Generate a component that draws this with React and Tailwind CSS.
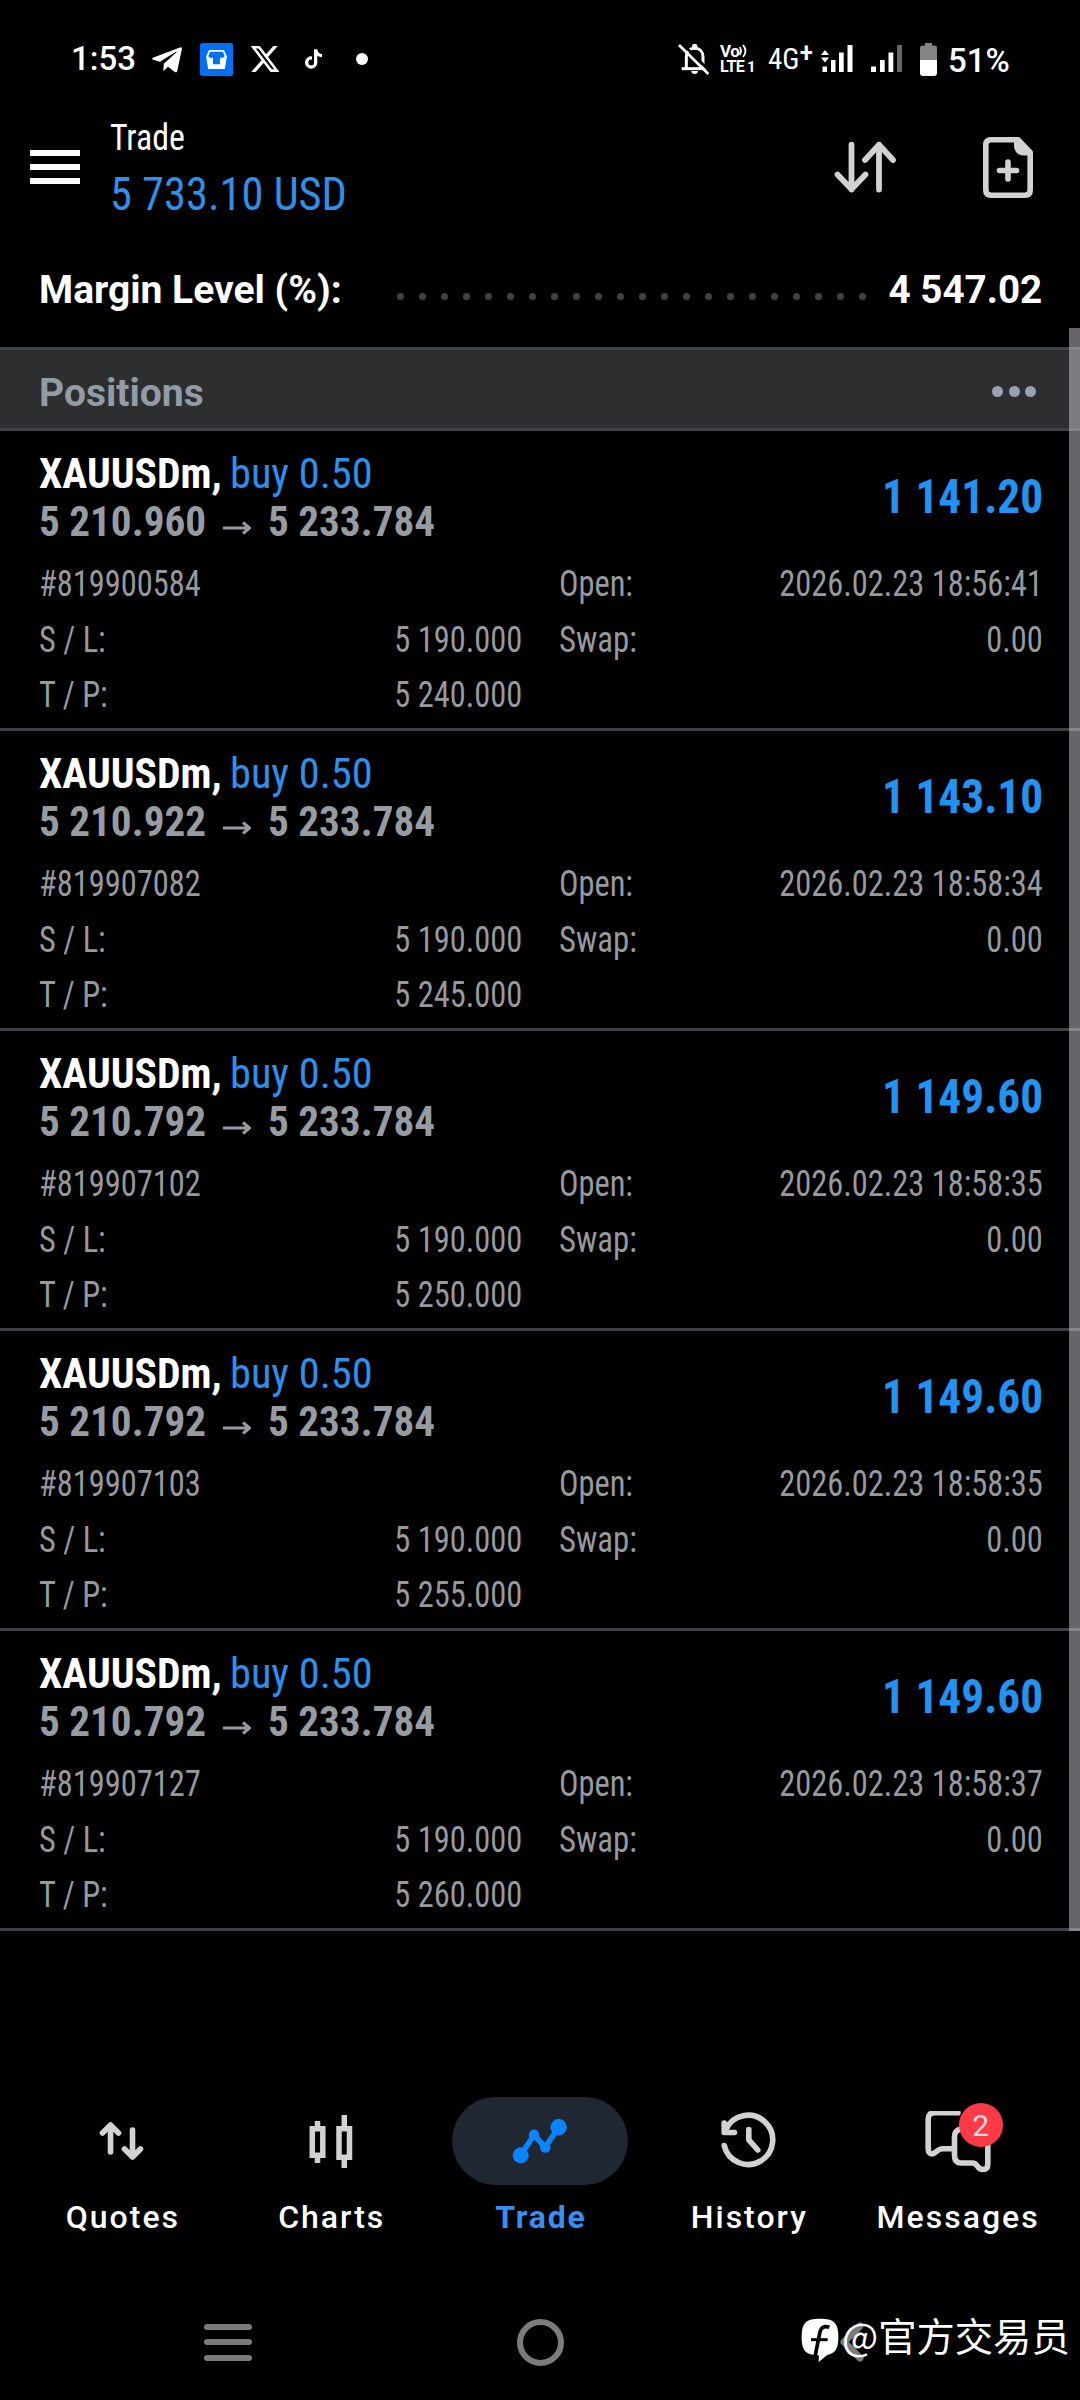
import { FaTelegramPlane } from "react-icons/fa";
import { FaTiktok, FaXTwitter } from "react-icons/fa6";

const positions = [
  { id: "#819900584", open: "5 210.960", profit: "1 141.20", time: "2026.02.23 18:56:41", tp: "5 240.000" },
  { id: "#819907082", open: "5 210.922", profit: "1 143.10", time: "2026.02.23 18:58:34", tp: "5 245.000" },
  { id: "#819907102", open: "5 210.792", profit: "1 149.60", time: "2026.02.23 18:58:35", tp: "5 250.000" },
  { id: "#819907103", open: "5 210.792", profit: "1 149.60", time: "2026.02.23 18:58:35", tp: "5 255.000" },
  { id: "#819907127", open: "5 210.792", profit: "1 149.60", time: "2026.02.23 18:58:37", tp: "5 260.000" },
];

function BellOff() {
  return (
    <svg viewBox="25 20 96 96" className="h-8 w-8" fill="none" stroke="white" strokeWidth="9">
      <path d="M50 96V62c0-15 9-26 25-26s25 11 25 26v34" />
      <path d="M36 97h74" />
      <circle cx="75" cy="30" r="8" fill="white" stroke="none" />
      <path d="M65 104h20c0 6-4 9-10 9s-10-3-10-9z" fill="white" stroke="none" />
      <path d="M36 20l84 84" stroke="black" strokeWidth="8" />
      <path d="M28 26l88 87" strokeWidth="8" />
    </svg>
  );
}

function ShopBadge() {
  return (
    <svg viewBox="0 0 33 33" className="h-[33px] w-[33px]">
      <rect width="33" height="33" rx="2.5" fill="#0070f5" />
      <path d="M9.500 7.500h14l2.800 6-2 12h-15.600l-2-12z" fill="white" stroke="white" strokeWidth="1.200" strokeLinejoin="round" />
      <path d="M10.200 8.800h12.600l2 4.500-2 1.500h-2.800v6.500h-7v-6.500h-2.800l-2-1.500z" fill="#0070f5" />
      <path d="M15 14.500h3v6h-3z" fill="#0070f5" />
    </svg>
  );
}

function Volte() {
  return (
    <div className="relative h-[30px] w-9 font-bold text-white">
      <span className="absolute left-0 top-0 text-[17px] leading-[14px] tracking-[-0.5px]">Vo</span>
      <svg viewBox="0 0 10 14" className="absolute left-[19px] top-0 h-[14px] w-2.5" fill="none" stroke="white" strokeWidth="1.8">
        <path d="M0.500 3q3 4 0 8M4 1q5 6 0 12" />
      </svg>
      <span className="absolute left-0 top-4 text-[16px] leading-[14px] tracking-[-0.5px]">LTE</span>
      <span className="absolute left-[27px] top-4 text-[15px] leading-[14px]">1</span>
    </div>
  );
}

function SignalData() {
  return (
    <svg viewBox="0 0 32 28" className="h-7 w-8" fill="white">
      <path d="M0 10l4-5 4 5zM0 12.500h8l-4 5z" />
      <path d="M1.500 21.500h4.500v5.500H1.500zM10 15h4.500v12H10zM18 7.500h4.700v19.500H18zM26.500 0h5v27h-5z" />
    </svg>
  );
}

function Signal() {
  return (
    <svg viewBox="0 0 32 28" className="h-7 w-8" fill="white">
      <path d="M1 21.500h5v5.500H1zM10 15h4.700v12H10zM18.500 7.500h4.800v19.500h-4.800z" />
      <path d="M27 0h5v27h-5z" fill="#666" />
    </svg>
  );
}

function Battery() {
  return (
    <svg viewBox="0 0 17 33" className="h-[33px] w-[17px]">
      <path d="M5 0h7v2.500h2.500q2.500 0 2.500 2.500v12H0V5q0-2.500 2.500-2.500H5z" fill="#858585" />
      <path d="M0 17h17v13q0 3-3 3H3q-3 0-3-3z" fill="white" />
    </svg>
  );
}

function StatusBar() {
  return (
    <div className="flex h-[118px] items-center justify-between pl-[71px] pr-[69px] text-white">
      <div className="flex items-center">
        <span className="w-[80px] text-[33px] font-medium leading-10">1:53</span>
        <FaTelegramPlane className="mt-0.5 h-[34px] w-[32px]" />
        <span className="ml-[17px]"><ShopBadge /></span>
        <FaXTwitter className="ml-[16px] h-8 w-8" />
        <FaTiktok className="ml-[24px] h-5 w-[17px]" />
        <span className="ml-[34px] h-3 w-3 rounded-full bg-white" />
      </div>
      <div className="flex items-center">
        <BellOff />
        <span className="ml-2.5"><Volte /></span>
        <span className="ml-3 flex h-10 w-[53px] text-[29px] leading-10 [font-stretch:75%]">
          4G<span className="-mt-1 text-[28px] font-medium leading-9">+</span>
        </span>
        <SignalData />
        <span className="ml-[17px]"><Signal /></span>
        <span className="ml-[18px]"><Battery /></span>
        <span className="ml-[11px] mt-1 w-[63px] text-[33px] font-medium leading-10">51%</span>
      </div>
    </div>
  );
}

function Header() {
  return (
    <header className="flex h-[98px] items-center pl-[30px] pr-[47px]">
      <div className="flex w-[50px] flex-col gap-2">
        <span className="h-1.5 bg-white" />
        <span className="h-1.5 bg-white" />
        <span className="h-1.5 bg-white" />
      </div>
      <div className="ml-[30px] flex-1 pt-0.5 [font-stretch:75%]">
        <div className="origin-left scale-x-[0.94] text-[36px] leading-[50px] text-white">Trade</div>
        <div className="origin-left scale-x-[0.945] text-[47px] leading-[61px] text-[#2f90e8]">5 733.10 USD</div>
      </div>
      <svg viewBox="0 0 62 52" className="h-[52px] w-[62px]" fill="none" stroke="#d2d2d2" strokeWidth="5.800" strokeLinecap="round" strokeLinejoin="round">
        <path d="M17.500 3.700V48.500M3.500 33.500l14 14.800 14-14.800M45 48.500V3.700M31 19l14-15.300L59 19" />
      </svg>
      <svg viewBox="0 0 50 61" className="ml-[87px] h-[61px] w-[50px]" fill="none" stroke="#d2d2d2" strokeWidth="5.600" strokeLinecap="round">
        <path d="M35 2.800H8q-5.200 0-5.200 5.200v45q0 5.200 5.200 5.200h34q5.200 0 5.200-5.200V15.500z" strokeLinejoin="round" />
        <path d="M31 4v4q0 10 10 10.500h6V14L36 3z" fill="#d2d2d2" stroke="none" />
        <path d="M16.500 33.500h17M25 25v17" />
      </svg>
    </header>
  );
}

function MarginRow() {
  return (
    <div className="flex h-[131px] items-center justify-between pl-[39px] pr-[38px] pt-[17px] text-[39px] font-bold leading-[50px] text-white">
      <span className="w-[358px]">Margin Level (%):</span>
      <div className="mt-3 flex flex-1 gap-[15px]">
        {Array.from({ length: 22 }, (_, i) => (
          <span key={i} className="h-[7px] w-[7px] shrink-0 rounded-full bg-[#434145]" />
        ))}
      </div>
      <span className="origin-right scale-x-[0.99]">4 547.02</span>
    </div>
  );
}

function Position({ item }) {
  return (
    <article className="h-[300px] border-b-3 border-[#434047] pl-[39px] pr-[38px] pt-[18px] [font-stretch:75%]">
      <div className="flex items-center justify-between leading-[48px]">
        <div>
          <div className="flex text-[43px]">
            <span className="w-[191px] origin-left scale-x-[0.97] whitespace-nowrap font-bold text-white">XAUUSDm,</span>
            <span className="origin-left scale-x-[0.985] text-[#2d90ee]">buy 0.50</span>
          </div>
          <div className="flex items-center text-[43px] font-bold text-[#979ba2]">
            <span className="w-[184px] origin-left scale-x-[0.957]">{item.open}</span>
            <svg viewBox="0 0 28 16" className="mt-[13px] h-4 w-7" fill="none" stroke="#9999a1" strokeWidth="3">
              <path d="M0 8h26.500M20 2.500l6.500 5.500-6.500 5.500" />
            </svg>
            <span className="ml-[17px] origin-left scale-x-[0.957]">5 233.784</span>
          </div>
        </div>
        <span className="origin-right translate-x-px scale-x-[0.925] text-[49px] font-bold text-[#2193f3]">{item.profit}</span>
      </div>
      <div className="mt-3 grid grid-cols-2 gap-x-[37px] text-[36px] leading-[55.5px] text-[#97999f]">
        <div className="flex"><span className="origin-left scale-x-90">{item.id}</span></div>
        <div className="flex justify-between">
          <span className="origin-left scale-x-90">Open:</span>
          <span className="origin-right translate-x-px scale-x-[0.9]">{item.time}</span>
        </div>
        <div className="flex justify-between">
          <span className="origin-left scale-x-90">S / L:</span>
          <span className="origin-right scale-x-90">5 190.000</span>
        </div>
        <div className="flex justify-between">
          <span className="origin-left scale-x-[0.91]">Swap:</span>
          <span className="origin-right translate-x-px scale-x-90">0.00</span>
        </div>
        <div className="flex justify-between">
          <span className="origin-left scale-x-90">T / P:</span>
          <span className="origin-right scale-x-90">{item.tp}</span>
        </div>
      </div>
    </article>
  );
}

const line = { fill: "none", stroke: "#d2d2d2", strokeWidth: 5.6, strokeLinecap: "round", strokeLinejoin: "round" };

function QuotesIcon() {
  return (
    <svg viewBox="0 0 60 60" className="h-[60px] w-[60px]" {...line}>
      <path d="M18.500 41V14M10.500 22l8-8 8 8M40.500 19v27M32.500 38l8 8 8-8" />
    </svg>
  );
}

function ChartsIcon() {
  return (
    <svg viewBox="0 0 60 60" className="h-[60px] w-[60px]" fill="none" stroke="#d2d2d2" strokeWidth="5.500">
      <path d="M11.300 17.800h10.500v26.500H11.300zM38 17.800h10.500v28.500H38zM16.500 10v6M16.500 46v6M43.300 4v12M43.300 48v9" />
    </svg>
  );
}

function TradeIcon() {
  return (
    <svg viewBox="0 0 60 60" className="h-[60px] w-[60px]" fill="#0a84ff">
      <path d="M10.700 44.300L24 24l11.200 12.300L48.600 16.300" fill="none" stroke="#0a84ff" strokeWidth="5.600" strokeLinejoin="round" />
      <circle cx="10.700" cy="44.300" r="8" />
      <circle cx="24" cy="23.800" r="5.200" />
      <circle cx="35.200" cy="36.600" r="5.200" />
      <circle cx="48.600" cy="16.300" r="8.200" />
    </svg>
  );
}

function HistoryIcon() {
  return (
    <svg viewBox="0 0 60 60" className="h-[60px] w-[60px]" {...line}>
      <path d="M6.800 18.500A24.600 24.600 0 1 1 5.200 34.500M5.200 12v9.500H15.500" />
      <path d="M29.800 18.500v10.300l9 10.200" />
    </svg>
  );
}

function MessagesIcon() {
  return (
    <div className="relative h-[60px] w-[60px]">
      <svg viewBox="0 0 90 70" className="absolute -left-1 top-0 h-[70px] w-[90px]" {...line}>
        <path d="M34 1.800H10.500q-6.300 0-6.300 6.300V38c0 4 2.500 5.500 5 4.700s4.500-5 9.500-5H30" />
        <path d="M36.500 18q-6 1.500-6 8v18.500q0 7.500 7 7.500h11c6 0 3.500 6.500 10.500 6.500q4.800 0 4.800-5V29" />
      </svg>
      <span className="absolute left-[31px] -top-2 flex h-11 w-11 items-center justify-center rounded-full bg-[#ff3945] pt-px text-[30px] text-[#ffdfe1]">2</span>
    </div>
  );
}

const tabs = [
  { label: "Quotes", Icon: QuotesIcon },
  { label: "Charts", Icon: ChartsIcon },
  { label: "Trade", Icon: TradeIcon, active: true },
  { label: "History", Icon: HistoryIcon },
  { label: "Messages", Icon: MessagesIcon },
];

function TabBar() {
  return (
    <nav className="mt-[166px] grid grid-cols-5 px-[18px]">
      {tabs.map(({ label, Icon, active }) => (
        <div key={label} className="flex flex-col items-center">
          <div className={active ? "flex h-[88px] w-[176px] items-center justify-center rounded-full bg-[#1f2832]" : "flex h-[88px] w-[176px] items-center justify-center"}>
            <Icon />
          </div>
          <span className={active ? "mt-3 pl-0.5 text-[32px] font-bold leading-10 tracking-[1.800px] text-[#368ff5]" : "mt-3 pl-px text-[32px] font-medium leading-10 tracking-[2px] text-white"}>
            {label}
          </span>
        </div>
      ))}
    </nav>
  );
}

function SystemBar() {
  return (
    <div className="relative mt-[65px] flex h-20 items-center pl-[204px]">
      <div className="flex w-12 flex-col gap-[9.500px]">
        <span className="h-1.5 rounded-sm bg-[#7a7a7a]" />
        <span className="h-1.5 rounded-sm bg-[#7a7a7a]" />
        <span className="h-1.5 rounded-sm bg-[#7a7a7a]" />
      </div>
      <span className="ml-[265px] h-[47px] w-[47px] rounded-full border-6 border-[#7c7c7c]" />
      <svg viewBox="0 0 26 42" className="ml-[275px] h-[42px] w-[26px]" fill="none" stroke="#7a7a7a" strokeWidth="7" strokeLinecap="round" strokeLinejoin="round">
        <path d="M21 5L5 21l16 16" />
      </svg>
      <div className="absolute left-[801px] top-2 flex text-white">
        <svg viewBox="62 118 114 134" className="mt-2 h-[44.700px] w-[38px]">
          <path d="M119 120c42 0 55 12 55 55s-13 55-55 55-55-12-55-55 13-55 55-55z" fill="white" />
          <path d="M116 215l-1 35 32-26z" fill="white" />
          <path d="M147 146c-17-7-26 2-29 18l-14 70" fill="none" stroke="black" strokeWidth="11" />
          <path d="M92 183h50" stroke="black" strokeWidth="9" />
        </svg>
        <span className="ml-[3px] whitespace-nowrap font-['Noto_Sans_CJK_SC',sans-serif] text-[38.300px] leading-[50px]">@官方交易员</span>
      </div>
    </div>
  );
}

export default function App() {
  return (
    <div className="h-[2400px] w-[1080px] overflow-hidden bg-black font-['Roboto',sans-serif]">
      <StatusBar />
      <Header />
      <main className="relative">
        <MarginRow />
        <div className="flex h-[84px] items-center justify-between border-y-3 border-[#3f4345] bg-[#2c2e2f] pl-[39px] pr-[44px]">
          <span className="pt-[7px] text-[39px] font-bold leading-[50px] text-[#929ca6]">Positions</span>
          <div className="mt-1 flex gap-[5.500px]">
            <span className="h-[11px] w-[11px] rounded-full bg-[#98a3ad]" />
            <span className="h-[11px] w-[11px] rounded-full bg-[#98a3ad]" />
            <span className="h-[11px] w-[11px] rounded-full bg-[#98a3ad]" />
          </div>
        </div>
        {positions.map((item) => (
          <Position key={item.id} item={item} />
        ))}
        <div className="absolute bottom-0 right-0 top-[112px] w-[11px] bg-[#cec8d6]/50" />
      </main>
      <TabBar />
      <SystemBar />
    </div>
  );
}
